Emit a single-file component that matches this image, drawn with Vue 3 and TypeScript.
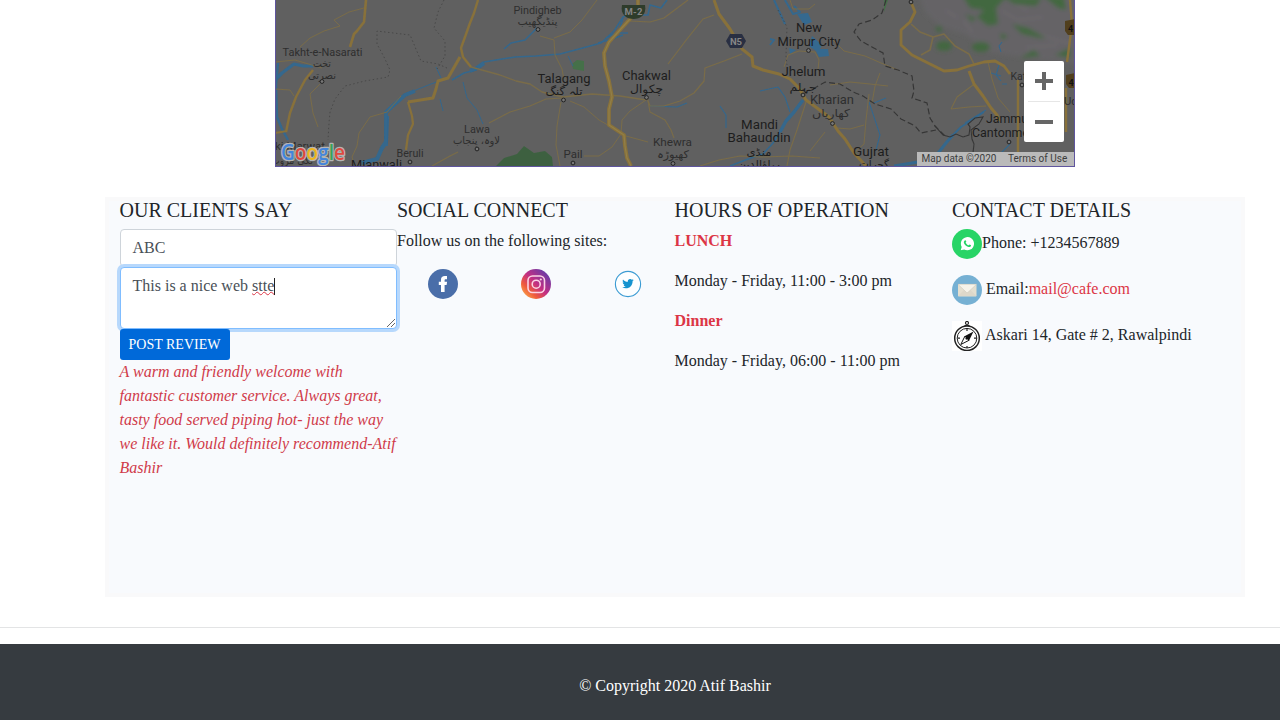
<script setup lang="ts">
interface Label { t: string; x: number; y: number; w: number; s: number; major?: boolean }
interface Line { d: string; w: number }

const labels: Label[] = [
  { t: 'Takht-e-Nasarati', x: 322.5, y: 56, w: 80, s: 11 },
  { t: 'Pindigheb', x: 537.5, y: 14, w: 48, s: 11 },
  { t: 'Talagang', x: 564, y: 82.5, w: 53, s: 12.5, major: true },
  { t: 'Chakwal', x: 646.5, y: 79.5, w: 49, s: 12.5, major: true },
  { t: 'Lawa', x: 477, y: 133, w: 26, s: 11 },
  { t: 'Beruli', x: 410, y: 157, w: 27, s: 11 },
  { t: 'Pail', x: 573, y: 158, w: 19, s: 11 },
  { t: 'Khewra', x: 672.5, y: 146, w: 39, s: 11 },
  { t: 'Mandi', x: 759.5, y: 129, w: 37, s: 12.5, major: true },
  { t: 'Bahauddin', x: 759, y: 142, w: 63, s: 12.5, major: true },
  { t: 'New', x: 809, y: 32, w: 26, s: 12.5, major: true },
  { t: 'Mirpur City', x: 809, y: 45.5, w: 63, s: 12.5, major: true },
  { t: 'Jhelum', x: 803.5, y: 76, w: 44, s: 12.5, major: true },
  { t: 'Kharian', x: 832, y: 104, w: 44, s: 12.3 },
  { t: 'Gujrat', x: 871, y: 156, w: 36, s: 12.5, major: true },
  { t: 'Kathua', x: 1027, y: 80, w: 33, s: 11 },
  { t: 'Jammu', x: 1007, y: 122.5, w: 42, s: 12.5, major: true },
  { t: 'Cantonment', x: 1006, y: 137, w: 68, s: 12.5, major: true },
  { t: 'Udh', x: 1074, y: 105, w: 20, s: 11 },
  { t: 'Lakki Marwat', x: 291, y: 150, w: 68, s: 11.8 },
  { t: 'Mianwali', x: 376.5, y: 169, w: 51, s: 12.5, major: true },
]

const urdu: Label[] = [
  { t: 'تخت', x: 322, y: 66.5, w: 18, s: 10.5 },
  { t: 'نصرتی', x: 322, y: 78.5, w: 28, s: 10.5 },
  { t: 'پنڈیگھیب', x: 537.5, y: 24.5, w: 40, s: 10.5 },
  { t: 'تلہ گنگ', x: 564, y: 94.5, w: 37, s: 11, major: true },
  { t: 'چکوال', x: 646.5, y: 92.5, w: 33, s: 11.5, major: true },
  { t: 'لاوہ، پنجاب', x: 476.5, y: 144, w: 47, s: 10.5 },
  { t: 'کھیوڑہ', x: 673, y: 158, w: 32, s: 10.5 },
  { t: 'منڈی', x: 759, y: 155.5, w: 25, s: 11, major: true },
  { t: 'بہاؤالدین', x: 759, y: 168, w: 42, s: 11, major: true },
  { t: 'جہلم', x: 803, y: 90.5, w: 27, s: 11, major: true },
  { t: 'کھاریاں', x: 831, y: 117, w: 38, s: 11 },
  { t: 'گجرات', x: 874, y: 168, w: 30, s: 11, major: true },
  { t: 'لکی مروت', x: 292, y: 163.5, w: 42, s: 10.5 },
]

const dots = [[322, 81.5], [538, 29.5], [563.5, 100], [646.5, 97.5], [477, 149], [410, 162], [573, 163], [673, 163.5], [808.5, 50.5], [803, 95], [832.5, 123.5], [911, 2], [1009, 142], [1022, 85]]

const highways: Line[] = [
  { d: 'M366 0L364 22 357 31 354 34 350 47', w: 2.6 },
  { d: 'M313 70L305 80 296 97 290 113 286 132', w: 2.4 },
  { d: 'M275 133L287 131', w: 2 },
  { d: 'M478 0L474 13 470 23 465 37 461 48 463 57 471 67', w: 2.4 },
  { d: 'M460 57L452 71 448 78 438 81 436 89 433 98 408 102', w: 3 },
  { d: 'M408 102L412 116 413 124 408 135 406 150', w: 2.2 },
  { d: 'M638 0V10L630 19 619 31 609 42 604 53 605 66 609 81 612 97 609 109 609 125 624 135 625 146 627 158 631 166', w: 3.8 },
  { d: 'M714 0L719 14 730 29 742 49 752 57 753 66 763 70 779 74 790 79 799 88 806 100 817 108 829 117 838 131 845 139 854 153 866 166', w: 3 },
  { d: 'M911 2L915 12 910 22 901 30 901 45 912 55 930 64 944 71 957 70 969 66 984 62 995 61 1004 66 1010 74', w: 2.8 },
  { d: 'M969 71L974 84 983 96 991 108 997 115 999 121', w: 3 },
  { d: 'M1018 80V166M1070 0L1072 25 1067 62M1066 88V132', w: 2.4 },
]
const roads: Line[] = [
  { d: 'M300 47L310 38 324 31 340 26 334 20 349 12 364 8', w: 1 },
  { d: 'M275 89L290 90 294 96M320 84L310 94 313 113 318 127M275 62L295 60 322 68', w: 1 },
  { d: 'M401 96L387 112 370 117 359 133 357 146 352 157 354 164', w: 1 },
  { d: 'M471 67L500 75 516 81 530 84 542 92 563 97 592 94 620 96 646 100', w: 1.3 },
  { d: 'M489 123L510 112 530 106 546 99 563 98M432 166L450 156 458 152', w: 1.2 },
  { d: 'M540 36L554 40 555 55 562 69 564 80M554 38L570 32 582 20 597 0', w: 1 },
  { d: 'M561 102L557 126 556 145 560 166M570 101L584 107 599 120 615 129 626 136 648 142M646 100L630 111 622 120 621 134 612 147 599 156 584 156', w: 1 },
  { d: 'M630 21L650 22 664 18 688 0M714 15L703 19 687 39 668 64M742 54L724 61 705 68 704 81 694 93 680 101 664 106 650 106 647 98', w: 1.2 },
  { d: 'M648 101L650 112 665 120 671 130 674 138M700 166L719 160 740 156 762 157 792 156 820 158', w: 1.1 },
  { d: 'M806 102L797 130 790 150 787 166', w: 1.1 },
  { d: 'M784 67L788 55 799 51 815 52 819 60 818 69M790 0L793 9 809 9 815 4M833 40L844 51 865 56 881 63 898 70', w: 1 },
  { d: 'M830 85L850 82 870 84 888 86M869 94L866 120 864 144 854 153M837 128L850 129 864 125M810 151L825 132M872 103L875 86 880 73', w: 1 },
  { d: 'M911 24L920 32 933 37 930 50 921 55M933 37L944 34 955 46 969 54 974 64', w: 1.6 },
  { d: 'M951 109L957 97 973 85M951 109L969 107 986 106', w: 1.1 },
  { d: 'M988 62L992 79 998 98 1010 112', w: 1 },
]
const water: Line[] = [
  { d: 'M275 80L282 73 294 64 303 66 313 66', w: 3.2 },
  { d: 'M278 63L276 85 277 117 282 129 288 140', w: 2.4 },
  { d: 'M362 163L377 159 382 148 386 142 387 116', w: 4.2 },
  { d: 'M386 146L386 112 396 103 405 95 415 91', w: 3.8 },
  { d: 'M405 94L416 90 431 84 447 78', w: 1 },
  { d: 'M452 80L464 73 476 70 484 62 502 59 515 57 536 56 560 54 579 49 601 43 614 31 623 17 635 12', w: 1.5 },
  { d: 'M470 71L477 68 484 63', w: 4 },
  { d: 'M504 49L511 43 525 40 537 28M598 43L612 39 623 35M606 38L616 33 628 33M619 31L623 18M634 15L648 15 650 5 661 8 667 0', w: 1.6 },
  { d: 'M463 82L467 98 477 110 483 124M440 99L443 111M436 67L442 80M568 56L573 66', w: 1 },
  { d: 'M774 0L780 13 785 24M785 0L793 14 800 12 794 6M770 39L774 40 770 45', w: 2 },
  { d: 'M803 100L794 112 786 121 780 132', w: 3.4 },
  { d: 'M780 132L773 143 763 154 748 159 730 166', w: 1.6 },
  { d: 'M790 112L785 97 778 87 760 91M720 106L726 115 726 128M650 106L677 107 687 103', w: 1.2 },
  { d: 'M894 166L918 162 935 157 946 143 953 135', w: 3 },
  { d: 'M950 138L961 127 984 112', w: 1.8 },
  { d: 'M869 102L875 120 880 135 876 150M874 103L886 98M986 110L965 123', w: 1.1 },
  { d: 'M1002 42L999 46 1001 52M999 65L996 75 1001 81M991 73L1001 76M1002 84H1007M1000 154L1010 144', w: 1.1 },
]
const borders = [
  'M886 0L882 13 872 20 859 24 854 32 861 41 872 47 883 53 885 66 898 70 912 76 914 91 912 98 927 103 930 118 935 126 946 137',
  'M813 89L825 82 840 84 853 92 863 96 875 104 891 109 901 119 915 126 921 133 936 130',
]
const dotted = [
  'M447 68L438 64 421 61 413 42 410 35 377 31 377 44 384 57 390 70 388 77 365 81 345 86 335 99 330 112 329 123 328 140',
  'M444 0L438 12 434 28 445 41 445 56 437 69M778 10L787 27 786 56 787 65',
]
const social = ['facebook', 'instagram', 'twitter']
</script>

<template>
  <div class="viewport">
    <div class="page">
      <div class="map">
        <svg class="map-art" viewBox="276 0 798 166" width="798" height="166">
          <defs>
            <filter id="soft"><feGaussianBlur stdDeviation="0.45" /></filter>
            <filter id="terrain" x="-10%" y="-10%" width="120%" height="120%"><feGaussianBlur stdDeviation="2" /></filter>
          </defs>
          <rect x="275" y="0" width="801" height="167" fill="#606060" />
          <g filter="url(#terrain)">
            <path d="M918-8H1085V66L1060 62 1040 60 1020 57 990 52 966 35 940 26 925 12Z" fill="#656466" />
            <path d="M1000 10L1018 20 1044 17M1025 48L1058 45M1010 0L1028 11M963 20L973 33M1040 35L1072 44M945 10L958 18" fill="none" stroke="#6a666b" stroke-width="3" />
            <g fill="#43683f">
              <path d="M962-5L970 8 984 10 977 17 988 26 998 24 996 8 1008-5ZM1003-3L1014 4 1036 6 1042-2ZM1012 24L1028 28 1046 38 1040 38 1022 34Z" />
              <circle cx="939" cy="29" r="3" /><ellipse cx="944" cy="46" rx="8" ry="5" /><ellipse cx="981" cy="47" rx="9" ry="5" />
              <path d="M1042-5L1064-3 1066 10 1058 8Z" />
              <path d="M965 14L976 18 972 22ZM1020 58L1034 50 1040 56ZM1055 55L1070 48 1070 58ZM1000 33L1008 36 1002 40Z" />
            </g>
          </g>
          <g filter="url(#soft)">
            <path d="M496 166L504 158 517 154 524 146 534 153 545 151 552 157 553 166Z" fill="#3d6141" />
            <path d="M572 64L577 60 584 61 584 71 573 69Z" fill="#456f48" />
            <path d="M884 0H888L884 12Z" fill="#456f48" />
            <path d="M797 14L808 13 812 22 804 25ZM789 48L796 50 790 54ZM812 36L822 45 820 49 828 49 829 56 819 57 816 51 809 46Z" fill="#35698f" />
            <g fill="none" stroke="#34678d" stroke-linejoin="round">
              <path v-for="l in water" :key="l.d" :d="l.d" :stroke-width="l.w" />
            </g>
            <g fill="none" stroke="#7a6c48" stroke-linejoin="round">
              <path v-for="l in roads" :key="l.d" :d="l.d" :stroke-width="l.w" />
            </g>
            <g fill="none" stroke="#88713a" stroke-linejoin="round">
              <path v-for="l in highways" :key="l.d" :d="l.d" :stroke-width="l.w" />
            </g>
            <path :d="highways[6].d" fill="none" stroke="#927f48" stroke-width="1.200" />
            <g fill="none" stroke="#363636" stroke-width="1.200" stroke-dasharray="6 3">
              <path v-for="d in borders" :key="d" :d="d" />
            </g>
            <path d="M935 126L943 135 950 137 956 134 963 137 969 135 970 127 968 124 975 118 983 117 979 124 971 130 972 139 974 144 973 153" fill="none" stroke="#363636" stroke-width="1.100" />
            <g fill="none" stroke="#484848" stroke-width="1" stroke-dasharray="1.5 2.5">
              <path v-for="d in dotted" :key="d" :d="d" />
            </g>
          </g>
          <path d="M622 5H645C647 15 640 19 633.500 19 627 19 620 15 622 5Z" fill="#2e3c2b" />
          <text class="shield" x="633.500" y="14.500" textLength="18">M-2</text>
          <path d="M730 34H742L746 41 742 48H730L726 41Z" fill="#292f42" />
          <text class="shield" x="736" y="44.800" textLength="12">N5</text>
          <g>
            <path d="M1065 21L1075 19V35H1068L1065 31ZM1066 75L1075 73V88H1069L1066 84Z" fill="#513f1d" />
            <text class="route" x="1068" y="32">4</text><text class="route" x="1068.500" y="86">4</text>
          </g>
          <g class="labels">
            <text v-for="l in labels" :key="l.t" :x="l.x" :y="l.y" :textLength="l.w" lengthAdjust="spacingAndGlyphs" :font-size="l.s" :class="{ major: l.major }">{{ l.t }}</text>
          </g>
          <g class="labels urdu">
            <text v-for="l in urdu" :key="l.t" :x="l.x" :y="l.y" :textLength="l.w" lengthAdjust="spacingAndGlyphs" :font-size="l.s" :class="{ major: l.major }">{{ l.t }}</text>
          </g>
          <g fill="#777" stroke="#222" stroke-width="1">
            <circle v-for="p in dots" :key="p.join()" :cx="p[0]" :cy="p[1]" r="1.900" />
          </g>
          <text class="google" x="281" y="159.500" textLength="64" lengthAdjust="spacingAndGlyphs"><tspan fill="#4285dc">G</tspan><tspan fill="#e0493e">o</tspan><tspan fill="#eeb51c">o</tspan><tspan fill="#4285dc">g</tspan><tspan fill="#38a357">l</tspan><tspan fill="#e0493e">e</tspan></text>
        </svg>
        <div class="zoom-control">
          <span class="zoom-key"><i class="bar" /><i class="bar upright" /></span>
          <span class="divider" />
          <span class="zoom-key"><i class="bar" /></span>
        </div>
        <div class="credits"><span class="c1">Map data ©2020</span><span class="c2">Terms of Use</span></div>
      </div>

      <section class="info">
        <div class="col">
          <h5>OUR CLIENTS SAY</h5>
          <div class="field">ABC</div>
          <div class="field area">This is a nice web <span class="typo">stte</span><span class="caret" />
            <svg class="grip" width="10" height="10" viewBox="0 0 10 10"><path d="M1 9L9 1M5 9L9 5" stroke="#666" fill="none" /></svg>
          </div>
          <button class="post" type="button">POST REVIEW</button>
          <p class="review">A warm and friendly welcome with<br>fantastic customer service. Always great,<br>tasty food served piping hot- just the way<br>we like it. Would definitely recommend-Atif<br>Bashir</p>
        </div>
        <div class="col">
          <h5>SOCIAL CONNECT</h5>
          <p>Follow us on the following sites:</p>
          <div class="social">
            <span v-for="s in social" :key="s">
              <svg width="30" height="30" viewBox="0 0 30 30">
                <template v-if="s === 'facebook'">
                  <circle cx="15" cy="15" r="15" fill="#4a6ea9" />
                  <path d="M13 23V16H10.800V12.700H13V10.600C13 8 14.400 6.900 16.800 6.900H19V10.200H17.700C16.800 10.200 16.600 10.600 16.600 11.400V12.700H19.100L18.600 16H16.600V23Z" fill="#fff" />
                </template>
                <template v-else-if="s === 'instagram'">
                  <defs>
                    <linearGradient id="ig" x1="0.100" y1="0.900" x2="0.850" y2="0.150">
                      <stop offset="0" stop-color="#f9a34b" /><stop offset="0.250" stop-color="#ef5b3c" /><stop offset="0.550" stop-color="#c32f83" /><stop offset="1" stop-color="#6e3aa5" />
                    </linearGradient>
                  </defs>
                  <circle cx="15" cy="15" r="15" fill="url(#ig)" />
                  <rect x="7" y="7" width="16.500" height="16.500" rx="4.500" fill="none" stroke="#fbd3e4" stroke-width="1.600" />
                  <circle cx="15.200" cy="15.200" r="4" fill="none" stroke="#fbd3e4" stroke-width="1.600" />
                  <circle cx="19.800" cy="10.500" r="1.100" fill="#fbd3e4" />
                </template>
                <template v-else>
                  <circle cx="15" cy="15" r="12.600" fill="#fcfeff" stroke="#3b9bd3" stroke-width="1.100" />
                  <g transform="translate(9.200 8.900) scale(.48)"><path d="M23.950 4.570a10 10 0 01-2.820.770 4.960 4.960 0 002.160-2.720c-.950.550-2 .960-3.130 1.180a4.920 4.920 0 00-8.380 4.480C7.690 8.100 4.070 6.130 1.640 3.160a4.920 4.920 0 001.520 6.570 4.900 4.900 0 01-2.230-.610v.060a4.920 4.920 0 003.950 4.830 5 5 0 01-2.210.080 4.940 4.940 0 004.600 3.420A9.870 9.870 0 010 19.540a14 14 0 007.550 2.210c9.050 0 14-7.500 14-13.980 0-.210 0-.420-.020-.630a9.940 9.940 0 002.460-2.550z" fill="#1593cf" /></g>
                </template>
              </svg>
            </span>
          </div>
        </div>
        <div class="col">
          <h5>HOURS OF OPERATION</h5>
          <p class="meal">LUNCH</p>
          <p>Monday - Friday, 11:00 - 3:00 pm</p>
          <p class="meal">Dinner</p>
          <p>Monday - Friday, 06:00 - 11:00 pm</p>
        </div>
        <div class="col">
          <h5>CONTACT DETAILS</h5>
          <div class="contact">
            <svg width="30" height="30" viewBox="0 0 30 30">
              <circle cx="15" cy="15" r="15" fill="#28d466" />
              <path d="M8.700 21.300L9.700 17.900A6.600 6.600 0 1 1 12.200 20.400Z" fill="#fff" />
              <path d="M12.700 11.500C13.400 10.700 13.900 11.400 14.300 12.600 14.400 13 13.700 13.400 13.700 13.700 14.300 14.900 15.200 15.800 16.500 16.300 16.900 16.300 17.200 15.400 17.600 15.500L19.100 16.300C18.900 17.900 17.600 18.300 16.500 18 14 17.300 12.300 15.600 11.800 13.500 11.700 12.700 12 12 12.700 11.500Z" fill="#28d466" />
            </svg>
            <span>Phone: +1234567889</span>
          </div>
          <div class="contact gap">
            <svg width="30" height="30" viewBox="0 0 30 30">
              <circle cx="15" cy="15" r="15" fill="#76b0d3" />
              <rect x="6" y="9" width="18.500" height="12.500" rx="0.700" fill="#e4dfd0" />
              <path d="M6 21L12.500 14.500H18L24.500 21Z" fill="#ddd8ca" />
              <path d="M6 9.300H24.500L16 17.300Q15.200 18 14.400 17.300Z" fill="#f6f3ea" stroke="#c6c4b9" stroke-width=".500" />
            </svg>
            <span>Email:<a>mail@cafe.com</a></span>
          </div>
          <div class="contact gap place">
            <svg class="compass" width="30" height="30" viewBox="0 0 30 30">
              <g fill="none" stroke="#222">
                <circle cx="15" cy="17.200" r="12.300" stroke-width="1.500" /><circle cx="15" cy="17.200" r="9.800" stroke-width="1" />
                <circle cx="15" cy="2" r="1.500" stroke-width="1.200" /><path d="M12.500 4.500H17.500M15 7.500V10M15 25V27M5.500 17.200H8M22 17.200H25" stroke-width="1.200" />
              </g>
              <path d="M21.500 10.500L17.200 19.200 13 15Z" fill="#111" /><path d="M8.800 23.500L13 15 17.200 19.200Z" fill="#fff" stroke="#111" stroke-width="1" /><circle cx="15" cy="17.100" r="1.700" fill="#111" />
            </svg>
            <span>Askari 14, Gate # 2, Rawalpindi</span>
          </div>
        </div>
      </section>
      <hr>
      <footer>© Copyright 2020 Atif Bashir</footer>
    </div>
  </div>
</template>

<style>
body { margin: 0; background: #fff; }
</style>

<style scoped>
* { box-sizing: border-box; }
.viewport { width: 1280px; height: 720px; overflow: hidden; }
.page { width: 1350px; font: 16px/24px "Liberation Serif", "Times New Roman", serif; color: #212529; }
.map { position: relative; width: 800px; height: 167px; margin: 0 auto 30px; border: 1px solid #5f559e; border-top: 0; overflow: hidden; }
.map-art { display: block; }
.labels { font-family: Roboto, sans-serif; fill: #2e2e2e; text-anchor: middle; }
.labels .major { fill: #1d1d1d; }
.urdu { font-family: "DejaVu Sans", sans-serif; }
.shield { font: bold 9.5px Roboto, sans-serif; fill: #858585; text-anchor: middle; }
.route { font: bold 9px Roboto, sans-serif; fill: #111; }
.google { font: 600 22px "Open Sans", sans-serif; stroke: #b4b4b4; stroke-width: 2.6px; paint-order: stroke; stroke-linejoin: round; }
.zoom-control { position: absolute; left: 748px; top: 61px; width: 40px; height: 81px; background: #fff; border-radius: 2px; display: flex; flex-direction: column; align-items: center; }
.zoom-key { width: 40px; height: 40px; display: grid; place-items: center; }
.bar { grid-area: 1 / 1; width: 18px; height: 4px; background: #666; }
.upright { transform: rotate(90deg); }
.divider { width: 32px; height: 1px; background: #e6e6e6; }
.credits { position: absolute; right: 0; bottom: 0; width: 157px; height: 14px; background: #bababa; color: #3c3c3c; font: 10px/14px Roboto, sans-serif; display: flex; padding-left: 4.5px; white-space: nowrap; }
.c1 { width: 86.5px; }
.c2 { letter-spacing: 0; }
.info { width: 1140px; height: 400px; margin: 0 auto; padding: 0 15px 0 14.5px; display: flex; background: #f8fafd; box-shadow: inset 0 0 0 4px #f9f9fa; }
.col { width: 277.5px; flex: none; }
h5 { margin: 0 0 7px; padding-top: 1px; font-size: 20px; font-weight: 400; line-height: 24px; white-space: nowrap; }
p { margin: 0 0 16px; white-space: nowrap; }
.field { width: 277.5px; height: 38px; padding: 6px 12px; border: 1px solid #ced4da; border-radius: 4px; background: #fff; color: #495057; white-space: nowrap; }
.area { position: relative; height: 62px; border-color: #80bdff; box-shadow: 0 0 0 3px #b7d8fc; }
.typo { text-decoration: underline wavy #dc3545 1px; text-underline-offset: 0; text-decoration-skip-ink: none; }
.caret { display: inline-block; width: 1px; height: 17px; background: #222; vertical-align: -4px; }
.grip { position: absolute; right: 0; bottom: 0; }
.post { display: block; position: relative; width: 110px; height: 31px; padding: 0; border: 0; border-radius: 3px; background: #0069d9; color: #fff; font: 14px/31px "Liberation Serif", serif; white-space: nowrap; }
.review { color: #d03a4a; font-style: italic; }
.social { display: flex; }
.social span { flex: 1; display: flex; justify-content: center; }
.meal { color: #dc3545; font-weight: 700; }
.contact { display: flex; align-items: center; height: 30px; margin-bottom: 16px; white-space: nowrap; }
.contact span { padding-bottom: 2px; }
.gap svg { margin-right: 4px; }
.place svg { margin-right: 3px; }
.compass { background: #fff; }
a { color: #dc3545; }
hr { margin: 30px 0 16px; border: 0; border-top: 1px solid #e3e4e5; }
footer { height: 84px; padding-top: 30px; background: #363b40; color: #fff; text-align: center; }
</style>
